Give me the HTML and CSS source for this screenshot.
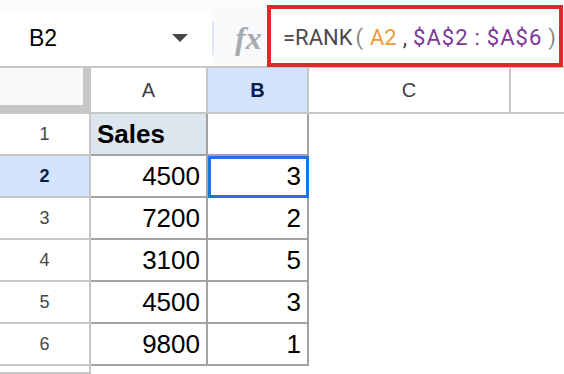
FILE: index.html
```html
<!DOCTYPE html>
<html lang="en">
<head>
  <meta charset="UTF-8" />
  <title>RANK formula</title>
  <link rel="stylesheet" href="styles.css">
</head>
<body>
  <div class="toolbar">
    <div class="namebox">
      <span class="cellref">B2</span>
      <svg class="caret" width="16" height="8" viewBox="0 0 16 8"><polygon points="0,0 16,0 8,8" fill="#444746"/></svg>
    </div>
    <div class="sep"></div>
    <div class="fx">fx</div>
    <div class="formula">
      <span class="fn">=RANK</span><span class="p open">(</span><span class="r1">A2</span><span class="p fn">,</span><span class="r2">$A$2</span><span class="p r2">:</span><span class="r2">$A$6</span><span class="p close">)</span>
    </div>
  </div>

  <div class="sheet">
    <div class="corner"></div>
    <div class="colhead">A</div>
    <div class="colhead active">B</div>
    <div class="colhead">C</div>
    <div class="colhead last"></div>

    <div class="rowhead">1</div>
    <div class="cell head">Sales</div>
    <div class="cell"></div>
    <div class="empty"></div>
    <div class="empty"></div>

    <div class="rowhead active">2</div>
    <div class="cell num">4500</div>
    <div class="cell num selected">3</div>
    <div class="empty"></div>
    <div class="empty"></div>

    <div class="rowhead">3</div>
    <div class="cell num">7200</div>
    <div class="cell num">2</div>
    <div class="empty"></div>
    <div class="empty"></div>

    <div class="rowhead">4</div>
    <div class="cell num">3100</div>
    <div class="cell num">5</div>
    <div class="empty"></div>
    <div class="empty"></div>

    <div class="rowhead">5</div>
    <div class="cell num">4500</div>
    <div class="cell num">3</div>
    <div class="empty"></div>
    <div class="empty"></div>

    <div class="rowhead">6</div>
    <div class="cell num">9800</div>
    <div class="cell num">1</div>
    <div class="empty"></div>
    <div class="empty"></div>

    <div class="rowhead"></div>
    <div class="empty"></div>
    <div class="empty"></div>
    <div class="empty"></div>
    <div class="empty"></div>
  </div>
</body>
</html>
```

FILE: styles.css
```css
* {
  box-sizing: border-box;
}
body {
  margin: 0;
  width: 564px;
  height: 374px;
  overflow: hidden;
  background: #fff;
  font-family: 'Liberation Sans', Arial, sans-serif;
}

/* name box + formula bar */
.toolbar {
  display: flex;
  height: 68px;
  padding-top: 10px;
  background: #f9fbfd;
  border-bottom: 2px solid #c4c7c5;
}
.namebox {
  width: 212px;
  background: #fff;
  display: flex;
  align-items: center;
  justify-content: space-between;
  padding: 0 24px 0 29px;
}
.cellref {
  font-size: 23px;
  color: #000;
}
.sep {
  width: 2px;
  height: 33px;
  align-self: center;
  background: #dde7f6;
}
.fx {
  width: 53px;
  background: #f8f9fa;
  display: flex;
  align-items: center;
  padding-left: 21px;
  font-family: 'Liberation Serif', serif;
  font-style: italic;
  font-weight: bold;
  font-size: 32px;
  color: #a7abaf;
}
.formula {
  flex: 1;
  height: 62px;
  margin: -5px 1px 0 0;
  border: 4px solid #dd2a2a;
  background: #fff;
  display: flex;
  align-items: center;
  padding: 2px 0 0 12px;
  font-family: Roboto, sans-serif;
  font-size: 22px;
  white-space: nowrap;
}
.fn { color: #4a4a4a; }
.p { color: #8a8a8a; margin: 0 6px; }
.p.open { margin: 0 7px 0 3px; }
.p.close { margin: 0 0 0 6px; }
.p.fn { color: #4a4a4a; }
.r1 { color: #f09a36; }
.r2 { color: #7e3794; letter-spacing: 1px; }
.p.r2 { color: #7e3794; }

/* grid */
.sheet {
  display: grid;
  grid-template-columns: 91px 117px 101px 202px 1fr;
  grid-template-rows: 46px repeat(6, 42px) 1fr;
  height: 306px;
}
.corner {
  background: #f8f9fa;
  border-right: 8px solid #c4c7c5;
  border-bottom: 9px solid #c4c7c5;
}
.colhead {
  display: flex;
  align-items: center;
  justify-content: center;
  font-size: 20px;
  color: #3c4043;
  border-right: 2px solid #c4c7c5;
  border-bottom: 2px solid #c4c7c5;
}
.colhead.last {
  border-right: none;
}
.colhead.active, .rowhead.active {
  background: #d3e3fd;
  color: #041e49;
  font-weight: bold;
}
.rowhead {
  display: flex;
  align-items: center;
  justify-content: center;
  font-size: 18px;
  color: #444746;
  border-right: 2px solid #c4c7c5;
  border-bottom: 2px solid #c4c7c5;
}
.cell {
  display: flex;
  align-items: center;
  font-size: 26px;
  color: #000;
  border-right: 2px solid #a3a3a3;
  border-bottom: 2px solid #a3a3a3;
}
.cell.head {
  background: #dde6ef;
  font-weight: bold;
  padding-left: 6px;
}
.cell.num {
  justify-content: flex-end;
  padding-right: 6px;
}
.cell.selected {
  outline: 3px solid #1a73e8;
  outline-offset: -3px;
}
.empty {
  background: #fff;
}
```
